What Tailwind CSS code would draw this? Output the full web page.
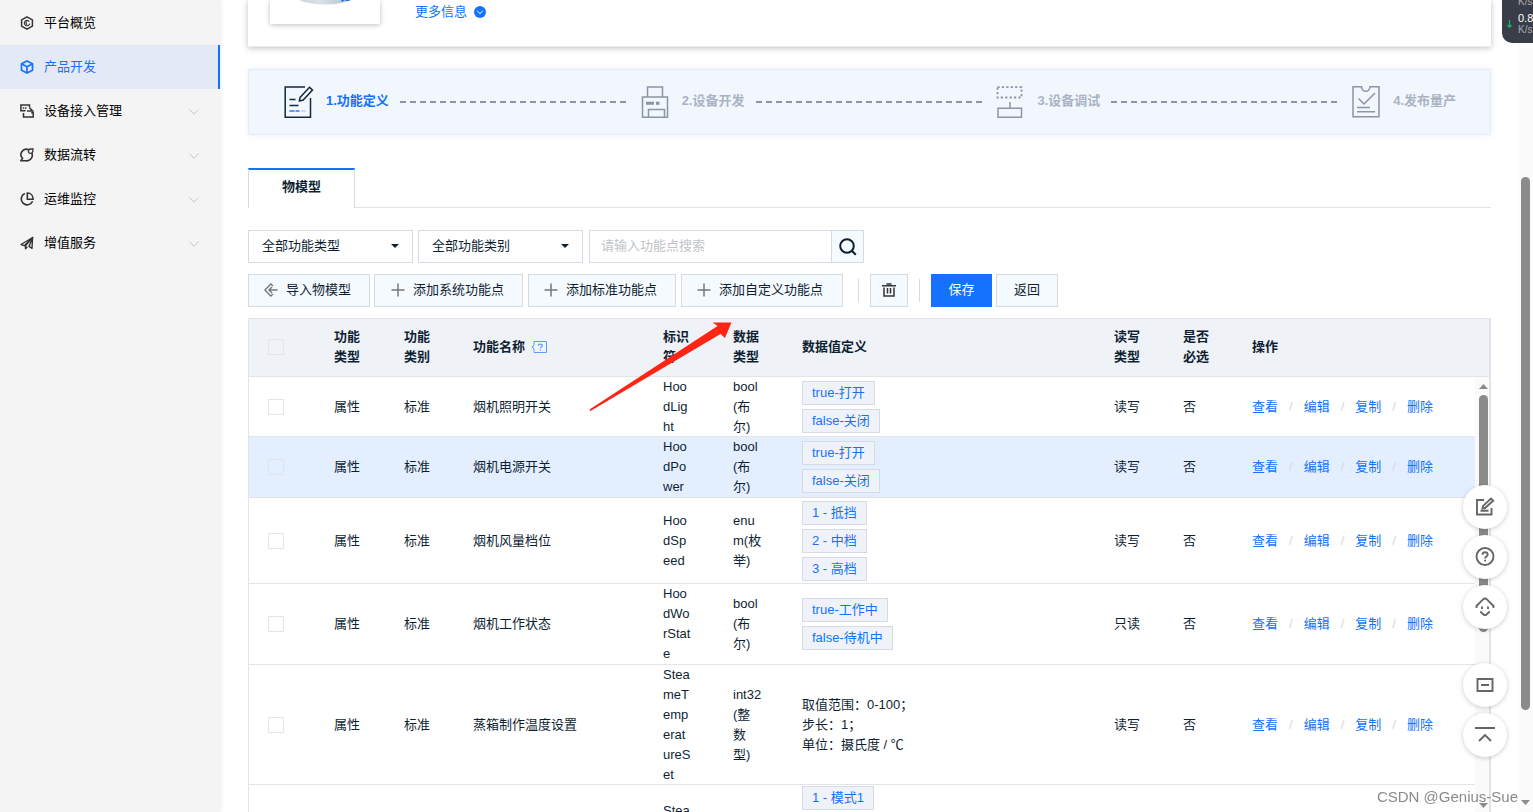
<!DOCTYPE html>
<html lang="zh-CN">
<head>
<meta charset="utf-8">
<meta name="viewport" content="width=device-width, initial-scale=1">
<title>产品开发 - 物模型</title>
<script src="https://cdn.jsdelivr.net/npm/@tailwindcss/browser@4"></script>
</head>
<body class="flex h-screen overflow-hidden bg-white font-['Liberation_Sans','Noto_Sans_CJK_SC',sans-serif] text-[13px] leading-5 text-[#0f1f33]">

<!-- Sidebar -->
<nav aria-label="主导航" class="z-10 w-[220px] shrink-0 bg-[#f4f4f4] pt-px text-black shadow-[1px_0_4px_rgba(0,0,0,0.08)]">
  <ul>
    <li><a href="#" class="flex h-11 items-center gap-2.5 pl-5">
      <svg class="size-3.5 text-[#333]" viewBox="0 0 14 14" fill="none" stroke="currentColor" stroke-width="1.500"><path d="M7 .9l5.400 3v6.200L7 13.100l-5.400-3V3.900z"/><path d="M9.300 5.600A2.700 2.700 0 1 0 9.700 7.600M7.200 5.800a1.300 1.300 0 0 0 0 2.600" stroke-width="1.100"/></svg>
      <span>平台概览</span></a></li>
    <li><a href="#" aria-current="page" class="flex h-11 items-center gap-2.5 border-r-2 border-[#1472ff] bg-[#e3eaf5] pl-5 text-[#1472ff]">
      <svg class="size-3.5" viewBox="0 0 14 14" fill="none" stroke="currentColor" stroke-width="1.700" stroke-linejoin="round"><path d="M7 .9l5.500 2.900v6.400L7 13.100l-5.500-2.900V3.800z"/><path d="M1.800 4L7 6.700 12.200 4M7 6.700V13"/></svg>
      <span>产品开发</span></a></li>
    <li><a href="#" class="flex h-11 items-center gap-2.5 pr-5 pl-5">
      <svg class="size-3.5 text-[#333]" viewBox="0 0 14 14" fill="none" stroke="currentColor" stroke-width="1.500"><path d="M5.500 6.700H.9V1h8.600v2.200"/><path d="M2.700 4h1.500M5 4h1.500"/><path d="M7 6.900h5.700L9.300 3.500"/><path d="M3.500 9v4h9.700V8.800h-2"/></svg>
      <span class="grow">设备接入管理</span>
      <svg class="size-3 text-[#c4c4c4]" viewBox="0 0 12 12" fill="none" stroke="currentColor"><path d="M1.500 4.500L6 9.200l4.500-4.700"/></svg></a></li>
    <li><a href="#" class="flex h-11 items-center gap-2.5 pr-5 pl-5">
      <svg class="size-3.5 text-[#333]" viewBox="0 0 14 14" fill="none" stroke="currentColor" stroke-width="1.600"><path d="M8.500 1.600A5.400 5.400 0 0 0 2.500 10.300L.9 12.800h5A5.500 5.500 0 0 0 11.900 5.400"/><path d="M13 1h-2.400a2.200 2.200 0 1 0 2.200 2.400z" stroke-width="1.300"/></svg>
      <span class="grow">数据流转</span>
      <svg class="size-3 text-[#c4c4c4]" viewBox="0 0 12 12" fill="none" stroke="currentColor"><path d="M1.500 4.500L6 9.200l4.500-4.700"/></svg></a></li>
    <li><a href="#" class="flex h-11 items-center gap-2.5 pr-5 pl-5">
      <svg class="size-3.5 text-[#333]" viewBox="0 0 14 14" fill="none" stroke="currentColor" stroke-width="1.600"><path d="M4.800 1.500a5.900 5.900 0 1 0 7.800 7.700"/><path d="M7.300 1v6.200h5.800C13.100 3.500 10.700 1 7.300 1z"/></svg>
      <span class="grow">运维监控</span>
      <svg class="size-3 text-[#c4c4c4]" viewBox="0 0 12 12" fill="none" stroke="currentColor"><path d="M1.500 4.500L6 9.200l4.500-4.700"/></svg></a></li>
    <li><a href="#" class="flex h-11 items-center gap-2.5 pr-5 pl-5">
      <svg class="size-3.5 text-[#333]" viewBox="0 0 14 14" fill="none" stroke="currentColor" stroke-width="1.400" stroke-linejoin="round"><path d="M12.600 1.500L1 8.500l3.300 1.200zM12.600 1.500L5.500 9.800v3l1.900-2"/><path d="M12.600 1.500L9 10.400l3 1.900z"/></svg>
      <span class="grow">增值服务</span>
      <svg class="size-3 text-[#c4c4c4]" viewBox="0 0 12 12" fill="none" stroke="currentColor"><path d="M1.500 4.500L6 9.200l4.500-4.700"/></svg></a></li>
  </ul>
</nav>

<main class="flex min-w-0 grow flex-col pr-[27px] pl-7">
  <!-- Product summary card -->
  <section class="flex h-[47px] shrink-0 items-start border-b border-[#eee] pl-[22px] shadow-[0_1px_6px_rgba(0,0,0,0.25)]">
    <div class="flex h-6 w-[110px] justify-center overflow-hidden shadow-[0_1px_5px_rgba(0,0,0,0.25)]">
      <svg class="h-6 w-[110px]" viewBox="0 0 110 24" aria-hidden="true"><defs><linearGradient id="plate"><stop offset="0" stop-color="#c3d0da"/><stop offset=".45" stop-color="#d9e0e6"/><stop offset=".7" stop-color="#b9cbdc"/><stop offset="1" stop-color="#e3e9ee"/></linearGradient></defs><ellipse cx="55" cy="-20" rx="46" ry="24.500" fill="url(#plate)"/><path d="M71 0h4l-3 2zM76 0h4l-1 1h-4z" fill="#2b6fe0"/></svg>
    </div>
    <a href="#" class="mt-0.5 ml-[35px] flex items-center gap-[7px] text-[#1472ff]">更多信息
      <svg class="size-3" viewBox="0 0 12 12"><circle cx="6" cy="6" r="6" fill="#1472ff"/><path d="M3.200 5L6 7.600 8.800 5" fill="none" stroke="#fff"/></svg>
    </a>
  </section>

  <!-- Development steps -->
  <ol class="mt-[22px] flex h-[66px] shrink-0 items-center border border-[#e9edf3] bg-[#f2f7fe] pr-[34px] pl-[35px] font-bold text-[#a9b3c4] shadow-[0_0_6px_rgba(20,114,255,0.1)]">
    <li class="flex grow items-center text-[#1472ff]">
      <svg class="mr-3 h-[34px] w-[30px]" viewBox="0 0 30 34" fill="none" stroke="#16263b" stroke-width="1.500"><path d="M21 2H1.200v30.200H26.500V13"/><path d="M16 12.500l9.500-10.200 3 2.800-9.300 10-3.800 1z"/><path d="M5.500 14.500h6M5.500 20.500h9"/><path d="M5.500 26h5M11.500 26h4" stroke="#5b97f7" stroke-width="2"/><path d="M17 26h5" stroke="#c5dbfb" stroke-width="2"/></svg>
      <span class="pb-0.5">1.功能定义</span>
      <i class="mr-[13px] ml-[11px] h-0.5 grow bg-[repeating-linear-gradient(90deg,#8c93a3_0_6px,transparent_6px_10px)]"></i>
    </li>
    <li class="flex grow items-center">
      <svg class="mr-[13px] h-[34px] w-7" viewBox="0 0 28 34" fill="none" stroke="#8c95a5" stroke-width="1.500"><path d="M6.500 12V2h15v10M1.500 12h25v20.200h-25zM7.500 32V24.500h16V32"/><path d="M5 18.300h8M15 18.300h3.500" stroke-width="3"/></svg>
      <span class="pb-0.5">2.设备开发</span>
      <i class="mr-[13px] ml-[11px] h-0.5 grow bg-[repeating-linear-gradient(90deg,#8c93a3_0_6px,transparent_6px_10px)]"></i>
    </li>
    <li class="flex grow items-center">
      <svg class="mr-[13px] h-[34px] w-7" viewBox="0 0 28 34" fill="none" stroke="#8c95a5" stroke-width="1.500"><path d="M1.500 2.200h24v10.300h-24z" stroke-width="1.800" stroke-dasharray="2.200 2.200"/><path d="M14 17v6M2 23.200h23.500v9H2z"/></svg>
      <span class="pb-0.5">3.设备调试</span>
      <i class="mr-[13px] ml-[11px] h-0.5 grow bg-[repeating-linear-gradient(90deg,#8c93a3_0_6px,transparent_6px_10px)]"></i>
    </li>
    <li class="flex items-center">
      <svg class="mr-[13px] h-[34px] w-7" viewBox="0 0 28 34" fill="none" stroke="#8c95a5" stroke-width="1.500"><path d="M1 1.800h8.500c1 6 7.500 6 8.500 0h9v30H1z"/><path d="M6.500 13.500l5.500 5.500 11-11M5 22.500h13M5 26.800h18"/></svg>
      <span class="pb-0.5">4.发布量产</span>
    </li>
  </ol>

  <!-- Tabs -->
  <div role="tablist" class="mt-[33px] flex h-10 shrink-0">
    <button role="tab" aria-selected="true" class="w-[107px] border-x border-t-2 border-x-[#d5dbe3] border-t-[#1472ff] pb-1 font-bold">物模型</button>
    <div class="grow border-b border-[#dfe2e6]"></div>
  </div>

  <!-- Filters -->
  <form class="mt-[22px] flex h-[33px] shrink-0" onsubmit="return false">
    <div class="relative mr-[5px] w-[165px]">
      <select aria-label="功能类型" class="size-full appearance-none border border-[#d5dbe3] bg-white pb-0.5 pl-[13px]"><option>全部功能类型</option></select>
      <svg class="pointer-events-none absolute top-3.5 right-3.5 h-1 w-2" viewBox="0 0 8 4"><path d="M0 0h8L4 4z" fill="#0f1f33"/></svg>
    </div>
    <div class="relative mr-1.5 w-[165px]">
      <select aria-label="功能类别" class="size-full appearance-none border border-[#d5dbe3] bg-white pb-0.5 pl-[13px]"><option>全部功能类别</option></select>
      <svg class="pointer-events-none absolute top-3.5 right-3.5 h-1 w-2" viewBox="0 0 8 4"><path d="M0 0h8L4 4z" fill="#0f1f33"/></svg>
    </div>
    <input type="search" aria-label="搜索功能点" placeholder="请输入功能点搜索" class="w-[242px] appearance-none border border-r-0 border-[#d5dbe3] px-[11px] pb-0.5 placeholder:text-[#bfc3c9]">
    <button aria-label="搜索" class="flex w-[33px] items-center justify-center border border-[#d5dbe3] bg-[#f5faff]">
      <svg class="size-[18px]" viewBox="0 0 18 18" fill="none" stroke="#0f1f33" stroke-width="2"><circle cx="8" cy="8" r="6.800"/><path d="M12.800 12.800l4 4"/></svg>
    </button>
  </form>

  <!-- Actions -->
  <div class="mt-[11px] flex h-[33px] shrink-0 items-stretch">
    <button class="mr-1 flex w-[122px] items-center gap-2 border border-[#d5dbe3] bg-[#f5faff] pb-0.5 pl-[15px]">
      <svg class="size-3.5" viewBox="0 0 14 14" fill="none" stroke="#777" stroke-width="1.400"><path d="M9 3L6.800 1 .9 7l5.900 6L9 11M13.500 7H5M8 4L5 7l3 3"/></svg>导入物模型</button>
    <button class="mr-[5px] flex w-[149px] items-center gap-2 border border-[#d5dbe3] bg-[#f5faff] pb-0.5 pl-4">
      <svg class="size-3.5" viewBox="0 0 14 14" stroke="#777" stroke-width="1.500"><path d="M7 .5v13M.5 7h13"/></svg>添加系统功能点</button>
    <button class="mr-[5px] flex w-[148px] items-center gap-2 border border-[#d5dbe3] bg-[#f5faff] pb-0.5 pl-[15px]">
      <svg class="size-3.5" viewBox="0 0 14 14" stroke="#777" stroke-width="1.500"><path d="M7 .5v13M.5 7h13"/></svg>添加标准功能点</button>
    <button class="flex w-[162px] items-center gap-2 border border-[#d5dbe3] bg-[#f5faff] pb-0.5 pl-[15px]">
      <svg class="size-3.5" viewBox="0 0 14 14" stroke="#777" stroke-width="1.500"><path d="M7 .5v13M.5 7h13"/></svg>添加自定义功能点</button>
    <span class="mx-[11px] my-[5px] ml-[15px] w-px bg-[#d5dbe3]"></span>
    <button aria-label="删除" class="flex w-[38px] items-center justify-center border border-[#d5dbe3] bg-[#f5faff] pb-0.5">
      <svg class="size-3.5" viewBox="0 0 14 14" fill="none" stroke="#333" stroke-width="1.500"><path d="M0 2.800h14M4.500 1h5M2 4.500v8.500h10V4.500M5.500 5v5.500M8.500 5v5.500"/></svg>
    </button>
    <span class="mx-[11px] my-[5px] w-px bg-[#d5dbe3]"></span>
    <button class="mr-1 w-[61px] bg-[#1472ff] pb-0.5 text-white">保存</button>
    <button class="w-[62px] border border-[#d5dbe3] bg-[#f5faff] pb-0.5">返回</button>
  </div>

  <!-- Feature table -->
  <section class="mt-[11px] flex min-h-0 grow flex-col border-t border-r-2 border-l border-[#e1e4e8]">
    <table class="w-full shrink-0 table-fixed bg-[#eff3f7] text-left">
      <colgroup><col class="w-[65px]"><col class="w-[70px]"><col class="w-[69px]"><col class="w-[190px]"><col class="w-[70px]"><col class="w-[69px]"><col><col class="w-[69px]"><col class="w-[69px]"><col class="w-[243px]"><col class="w-3.5"></colgroup>
      <thead>
        <tr class="h-[57px] border-b border-[#e1e4e8] *:pl-5">
          <th><input type="checkbox" aria-label="全选" class="-ml-px block size-4 appearance-none border border-[#e3e5e8]"></th>
          <th class="pr-5">功能类型</th><th class="pr-5">功能类别</th>
          <th><span class="flex items-center gap-1.5">功能名称
            <svg class="h-3 w-4" viewBox="0 0 16 12" fill="none" stroke="#5b9cff" role="img" aria-label="帮助"><path d="M3 3.500V.5h12.500v11H3v-3M3 3.500Q2.500 6 .8 6 2.500 6 3 8.500"/><path d="M7.300 4.800c0-2.300 4-2.300 4 0 0 1.200-1.900 1.200-1.900 2.500M9.400 8.200v1.200" stroke-width="1.200"/></svg></span></th>
          <th class="pr-5">标识符</th><th class="pr-5">数据类型</th><th>数据值定义</th><th class="pr-4">读写类型</th><th class="pr-4">是否必选</th><th>操作</th><th class="p-0"></th>
        </tr>
      </thead>
    </table>

    <div class="flex min-h-0 grow overflow-hidden">
      <div class="min-w-0 grow">
      <table class="w-full table-fixed text-left">
        <colgroup><col class="w-[65px]"><col class="w-[70px]"><col class="w-[69px]"><col class="w-[190px]"><col class="w-[70px]"><col class="w-[69px]"><col><col class="w-[69px]"><col class="w-[69px]"><col class="w-[243px]"></colgroup>
        <tbody>
          <tr class="h-[60px] shadow-[inset_0_-1px_#e3e5e8] *:pl-5">
            <td><input type="checkbox" aria-label="选择 烟机照明开关" class="-ml-px block size-4 appearance-none border border-[#e3e5e8]"></td>
            <td>属性</td><td>标准</td><td>烟机照明开关</td>
            <td class="pr-[21px] break-all">HoodLight</td><td class="pr-5 break-all">bool(布尔)</td>
            <td><div class="flex flex-col items-start gap-1 text-[#1472ff]"><span class="h-6 border border-[#d5dbe3] bg-[#eff3f9] px-[9px] leading-[22px]">true-打开</span><span class="h-6 border border-[#d5dbe3] bg-[#eff3f9] px-[9px] leading-[22px]">false-关闭</span></div></td>
            <td>读写</td><td>否</td>
            <td><div class="flex gap-[11px] text-[#d5d8dc]"><a href="#" class="text-[#1472ff]">查看</a><span>/</span><a href="#" class="text-[#1472ff]">编辑</a><span>/</span><a href="#" class="text-[#1472ff]">复制</a><span>/</span><a href="#" class="text-[#1472ff]">删除</a></div></td>
          </tr>
          <tr class="h-[61px] bg-[#e3efff] shadow-[inset_0_-1px_#dfe3e8] *:pl-5">
            <td><input type="checkbox" aria-label="选择 烟机电源开关" class="-ml-px block size-4 appearance-none border border-[#dfe5ec]"></td>
            <td>属性</td><td>标准</td><td>烟机电源开关</td>
            <td class="pr-[21px] break-all">HoodPower</td><td class="pr-5 break-all">bool(布尔)</td>
            <td><div class="flex flex-col items-start gap-1 text-[#1472ff]"><span class="h-6 border border-[#d5dbe3] bg-[#eff3f9] px-[9px] leading-[22px]">true-打开</span><span class="h-6 border border-[#d5dbe3] bg-[#eff3f9] px-[9px] leading-[22px]">false-关闭</span></div></td>
            <td>读写</td><td>否</td>
            <td><div class="flex gap-[11px] text-[#d5d8dc]"><a href="#" class="text-[#1472ff]">查看</a><span>/</span><a href="#" class="text-[#1472ff]">编辑</a><span>/</span><a href="#" class="text-[#1472ff]">复制</a><span>/</span><a href="#" class="text-[#1472ff]">删除</a></div></td>
          </tr>
          <tr class="h-[86px] shadow-[inset_0_-1px_#e3e5e8] *:pl-5">
            <td><input type="checkbox" aria-label="选择 烟机风量档位" class="-ml-px block size-4 appearance-none border border-[#e3e5e8]"></td>
            <td>属性</td><td>标准</td><td>烟机风量档位</td>
            <td class="pr-[21px] break-all">HoodSpeed</td><td class="pr-5 break-all">enum(枚举)</td>
            <td><div class="flex flex-col items-start gap-1 text-[#1472ff]"><span class="h-6 border border-[#d5dbe3] bg-[#eff3f9] px-[9px] leading-[22px]">1 - 抵挡</span><span class="h-6 border border-[#d5dbe3] bg-[#eff3f9] px-[9px] leading-[22px]">2 - 中档</span><span class="h-6 border border-[#d5dbe3] bg-[#eff3f9] px-[9px] leading-[22px]">3 - 高档</span></div></td>
            <td>读写</td><td>否</td>
            <td><div class="flex gap-[11px] text-[#d5d8dc]"><a href="#" class="text-[#1472ff]">查看</a><span>/</span><a href="#" class="text-[#1472ff]">编辑</a><span>/</span><a href="#" class="text-[#1472ff]">复制</a><span>/</span><a href="#" class="text-[#1472ff]">删除</a></div></td>
          </tr>
          <tr class="h-[81px] shadow-[inset_0_-1px_#e3e5e8] *:pl-5">
            <td><input type="checkbox" aria-label="选择 烟机工作状态" class="-ml-px block size-4 appearance-none border border-[#e3e5e8]"></td>
            <td>属性</td><td>标准</td><td>烟机工作状态</td>
            <td class="pr-[21px] break-all">HoodWorState</td><td class="pr-5 break-all">bool(布尔)</td>
            <td><div class="flex flex-col items-start gap-1 text-[#1472ff]"><span class="h-6 border border-[#d5dbe3] bg-[#eff3f9] px-[9px] leading-[22px]">true-工作中</span><span class="h-6 border border-[#d5dbe3] bg-[#eff3f9] px-[9px] leading-[22px]">false-待机中</span></div></td>
            <td>只读</td><td>否</td>
            <td><div class="flex gap-[11px] text-[#d5d8dc]"><a href="#" class="text-[#1472ff]">查看</a><span>/</span><a href="#" class="text-[#1472ff]">编辑</a><span>/</span><a href="#" class="text-[#1472ff]">复制</a><span>/</span><a href="#" class="text-[#1472ff]">删除</a></div></td>
          </tr>
          <tr class="shadow-[inset_0_-1px_#e3e5e8] *:pl-5">
            <td><input type="checkbox" aria-label="选择 蒸箱制作温度设置" class="-ml-px block size-4 appearance-none border border-[#e3e5e8]"></td>
            <td>属性</td><td>标准</td><td>蒸箱制作温度设置</td>
            <td class="pr-[21px] break-all">SteameTemperatureSet</td><td class="pr-5 break-all">int32(整数型)</td>
            <td>取值范围：0-100；<br>步长：1；<br>单位：摄氏度 / ℃</td>
            <td>读写</td><td>否</td>
            <td><div class="flex gap-[11px] text-[#d5d8dc]"><a href="#" class="text-[#1472ff]">查看</a><span>/</span><a href="#" class="text-[#1472ff]">编辑</a><span>/</span><a href="#" class="text-[#1472ff]">复制</a><span>/</span><a href="#" class="text-[#1472ff]">删除</a></div></td>
          </tr>
          <tr class="align-top *:pl-5">
            <td></td><td></td><td></td><td></td>
            <td class="pt-4">Stea</td><td></td>
            <td class="pt-px"><div class="flex flex-col items-start text-[#1472ff]"><span class="h-6 border border-[#d5dbe3] bg-[#eff3f9] px-[9px] leading-[22px]">1 - 模式1</span></div></td>
            <td></td><td></td><td></td>
          </tr>
        </tbody>
      </table>
      </div>
      <!-- Table scrollbar -->
      <div aria-hidden="true" class="flex w-3.5 shrink-0 flex-col items-end bg-[#fafafa] pt-[7px] pr-px pb-1">
        <svg class="h-[5px] w-[9px]" viewBox="0 0 9 5"><path d="M0 5h9L4.500 0z" fill="#8b8b8b"/></svg>
        <div class="mt-1.5 h-[237px] w-[9px] rounded-full bg-[#8b8b8b]"></div>
        <svg class="mt-auto h-[5px] w-[9px]" viewBox="0 0 9 5"><path d="M0 0h9L4.500 5z" fill="#8b8b8b"/></svg>
      </div>
    </div>
  </section>
</main>

<!-- Page scrollbar -->
<div aria-hidden="true" class="flex w-[15px] shrink-0 flex-col items-center bg-[#fbfbfb] pt-[177px] pb-[7px]">
  <div class="h-[533px] w-[9px] rounded-full bg-[#8b8b8b]"></div>
  <svg class="mt-auto h-[5px] w-[9px]" viewBox="0 0 9 5"><path d="M0 0h9L4.500 5z" fill="#8b8b8b"/></svg>
</div>

<!-- Floating tools -->
<div class="fixed top-[485px] right-[26px] z-20 flex flex-col gap-1.5 text-[#666] *:flex *:size-11 *:items-center *:justify-center *:rounded-full *:bg-white *:shadow-[0_1px_5px_rgba(0,0,0,0.2)]">
  <button aria-label="编辑反馈"><svg class="size-5" viewBox="0 0 20 20" fill="none" stroke="currentColor" stroke-width="1.900"><path d="M9 3H2v14.500h14.500V11M5.500 13.700h8"/><path d="M7.500 11.500l.6-2.600L16 1.500l2.200 2.200L10 11z"/></svg></button>
  <button aria-label="帮助"><svg class="size-5" viewBox="0 0 20 20" fill="none" stroke="currentColor" stroke-width="1.900"><circle cx="10" cy="9.500" r="8.500"/><path d="M7.500 7.700c0-3.200 5.200-3.200 5.200 0 0 1.900-2.600 1.800-2.600 3.800M10.100 12.700v1.800"/></svg></button>
  <button aria-label="智能助手"><svg class="size-5" viewBox="0 0 20 20" fill="none" stroke="currentColor" stroke-width="1.900"><path d="M1.500 11V9L8.300 2.200q1.700-1.400 3.400 0L18.500 9v2M5.300 14.500L8.500 17.500q1.500 1.200 3 0l3.200-3M7 9.500V12M13 9.500V12"/></svg></button>
  <button aria-label="收起" class="mt-7"><svg class="size-5" viewBox="0 0 20 20" fill="none" stroke="currentColor" stroke-width="1.900"><path d="M2.500 4h15v12h-15zM6 10h8"/></svg></button>
  <button aria-label="返回顶部"><svg class="size-5" viewBox="0 0 20 20" fill="none" stroke="currentColor" stroke-width="1.900"><path d="M0 3h20M4 16l6-6 6 6"/></svg></button>
</div>

<!-- Network speed widget -->
<div class="fixed top-0 right-0 z-20 h-[43px] w-[31px] overflow-hidden rounded-bl-[10px] bg-[#383d48]">
  <svg class="absolute top-5 left-[5px] h-2 w-[5px]" viewBox="0 0 5 8" fill="none" stroke="#19b86b" stroke-width="1.200"><path d="M2.500 0v7M.5 5l2 2.300 2-2.300"/></svg>
  <div class="absolute -top-1 left-4 flex flex-col text-[10px] leading-3 whitespace-nowrap text-[#a9adb5]"><span>K/s</span><span class="mt-1 text-[11px] text-white">0.8</span><span>K/s</span></div>
</div>

<!-- Pointer arrow -->
<svg class="pointer-events-none fixed top-[320px] left-[588px] z-20 h-[94px] w-[146px]" viewBox="588 320 146 94" aria-hidden="true"><path d="M731.500 322.500L712.500 322.500 717.500 326 589.500 409.500 590.500 411 720.500 334 725 338z" fill="#ff2514"/></svg>

<div class="pointer-events-none fixed right-[15px] bottom-[3px] z-20 text-[15px] leading-6 text-[#8a8a8a]">CSDN @Genius-Sue</div>
</body>
</html>
